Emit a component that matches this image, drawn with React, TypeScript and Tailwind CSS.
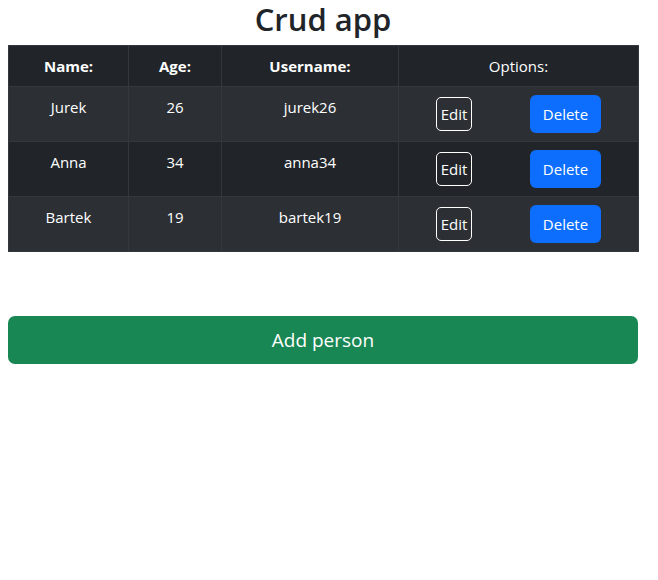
import React from "react";

const people = [
  { name: "Jurek", age: 26, username: "jurek26" },
  { name: "Anna", age: 34, username: "anna34" },
  { name: "Bartek", age: 19, username: "bartek19" },
];

export default function App() {
  return (
    <div
      className="w-[658px] px-[8px] text-[#212529] bg-white min-h-[580px]"
      style={{ fontFamily: '"Open Sans", "Noto Sans", sans-serif' }}
    >
      <h1 className="w-[630px] text-center text-[31px] leading-[38px] font-semibold mb-[7px]">Crud app</h1>
      <table className="w-[630px] border-collapse text-white text-[15px] leading-[24px] table-fixed">
        <colgroup>
          <col className="w-[120px]" />
          <col className="w-[93px]" />
          <col className="w-[177px]" />
          <col className="w-[240px]" />
        </colgroup>
        <thead>
          <tr className="bg-[#212529] h-[41px]">
            <th className="border border-[#32383e] px-2 py-2 font-bold text-center">Name:</th>
            <th className="border border-[#32383e] px-2 py-2 font-bold text-center">Age:</th>
            <th className="border border-[#32383e] px-2 py-2 font-bold text-center">Username:</th>
            <th className="border border-[#32383e] px-2 py-2 font-normal text-center">Options:</th>
          </tr>
        </thead>
        <tbody>
          {people.map((p, i) => (
            <tr key={p.username} className={i % 2 === 0 ? "bg-[#2c3034]" : "bg-[#212529]"}>
              <td className="border border-[#32383e] px-2 py-2 text-center align-top">{p.name}</td>
              <td className="border border-[#32383e] px-2 py-2 text-center align-top">{p.age}</td>
              <td className="border border-[#32383e] px-2 py-2 text-center align-top">{p.username}</td>
              <td className="border border-[#32383e] px-2 py-2 align-top">
                <div className="flex justify-around items-center h-[38px]">
                  <button className="w-[36px] h-[34px] border border-white rounded-[5px] text-[15px] text-white flex items-center justify-center">
                    Edit
                  </button>
                  <button className="w-[71px] h-[38px] bg-[#0d6efd] rounded-[6px] text-[15px] text-white flex items-center justify-center">
                    Delete
                  </button>
                </div>
              </td>
            </tr>
          ))}
        </tbody>
      </table>
      <button className="mt-[64px] w-[630px] h-[48px] bg-[#198754] rounded-[7px] text-white text-[19px] flex items-center justify-center">
        Add person
      </button>
    </div>
  );
}
